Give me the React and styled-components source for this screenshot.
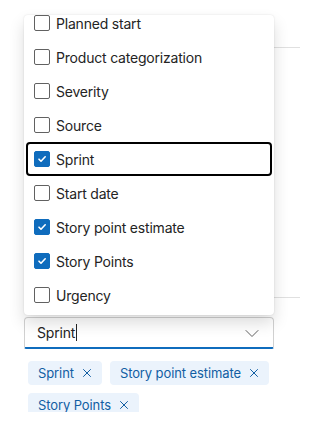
import { useLayoutEffect, useRef } from 'react';
import styled, { createGlobalStyle } from 'styled-components';

const GlobalStyle = createGlobalStyle`
  html, body {
    margin: 0;
    padding: 0;
    background: #ffffff;
  }
  body {
    font-family: Inter, "Liberation Sans", Arial, sans-serif;
    color: #242424;
  }
`;

const Page = styled.div`
  position: relative;
  height: 412px;
  overflow: hidden;
`;

const Column = styled.div`
  width: 276px;
  margin-left: 24px;
  display: flex;
  flex-direction: column;
`;

const Section = styled.div`
  height: ${(p) => p.$h}px;
  border-bottom: ${(p) => (p.$line ? '1px solid #e0e0e0' : 'none')};
`;

const Field = styled.div`
  width: 250px;
  height: 32px;
  box-sizing: border-box;
  display: flex;
  align-items: center;
  padding: 0 11px 0 12px;
  border: 1px solid #d1d1d1;
  border-bottom: 2px solid #0f6cbd;
  border-radius: 4px 4px 2px 2px;
  background: #ffffff;
  font-size: 14px;
  letter-spacing: -0.2px;
  color: #242424;
`;

const FieldText = styled.span`
  display: flex;
  align-items: center;
  flex: 1;
`;

const Caret = styled.span`
  display: inline-block;
  width: 1px;
  height: 17px;
  margin-left: 1px;
  background: #242424;
`;

const Tags = styled.div`
  display: flex;
  flex-wrap: wrap;
  gap: 8px;
  margin-top: 12px;
  padding-left: 4px;
`;

const Tag = styled.span`
  display: inline-flex;
  align-items: center;
  gap: 8px;
  height: 24px;
  padding: 0 10px;
  border-radius: 4px;
  background: #ebf3fc;
  color: #115ea3;
  font-size: 13px;
  letter-spacing: -0.1px;
`;

const Popover = styled.div`
  position: absolute;
  top: 15px;
  left: 24px;
  width: 250px;
  height: 300px;
  border-radius: 4px;
  background: #ffffff;
  box-shadow: 0 0 2px rgba(0, 0, 0, 0.12), 0 8px 16px rgba(0, 0, 0, 0.14);
  overflow: hidden;
`;

const List = styled.div`
  height: 100%;
  box-sizing: border-box;
  padding: 3px 2px;
  overflow-y: auto;
  scrollbar-width: none;
  &::-webkit-scrollbar {
    display: none;
  }
`;

const Option = styled.div`
  display: flex;
  align-items: center;
  gap: 6px;
  height: 34px;
  box-sizing: border-box;
  padding: 0 6px;
  border: 2px solid ${(p) => (p.$focused ? '#000000' : 'transparent')};
  border-radius: 4px;
  font-size: 14px;
  letter-spacing: -0.2px;
  color: #242424;
`;

const Box = styled.span`
  display: inline-flex;
  align-items: center;
  justify-content: center;
  flex-shrink: 0;
  width: 16px;
  height: 16px;
  box-sizing: border-box;
  border-radius: 2px;
  border: 1px solid ${(p) => (p.$checked ? '#0f6cbd' : '#616161')};
  background: ${(p) => (p.$checked ? '#0f6cbd' : '#ffffff')};
`;

const options = [
  { label: 'Original estimate' },
  { label: 'Parent' },
  { label: 'Pending reason' },
  { label: 'Planned end' },
  { label: 'Planned start' },
  { label: 'Product categorization' },
  { label: 'Severity' },
  { label: 'Source' },
  { label: 'Sprint', checked: true, focused: true },
  { label: 'Start date' },
  { label: 'Story point estimate', checked: true },
  { label: 'Story Points', checked: true },
  { label: 'Urgency' },
];

const selected = ['Sprint', 'Story point estimate', 'Story Points'];

const Check = () => (
  <svg width="12" height="12" viewBox="0 0 12 12">
    <path d="M3 6.2 L5 8.2 L9.2 3.8" fill="none" stroke="#ffffff" strokeWidth="1.6" strokeLinecap="round" strokeLinejoin="round" />
  </svg>
);

const Chevron = () => (
  <svg width="20" height="20" viewBox="0 0 20 20">
    <polyline points="4,7.5 10,13.5 16,7.5" fill="none" stroke="#616161" strokeWidth="1" strokeLinecap="round" strokeLinejoin="round" />
  </svg>
);

const Dismiss = () => (
  <svg width="10" height="10" viewBox="0 0 10 10">
    <path d="M1.5 1.5 L8.5 8.5 M8.5 1.5 L1.5 8.5" stroke="#115ea3" strokeWidth="1" strokeLinecap="round" />
  </svg>
);

export default function App() {
  const listRef = useRef(null);

  useLayoutEffect(() => {
    const el = listRef.current;
    if (el) el.scrollTop = el.scrollHeight;
  }, []);

  return (
    <Page>
      <GlobalStyle />
      <Column>
        <Section $h={47} $line />
        <Section $h={249} $line />
        <Section $h={19} />
        <Field>
          <FieldText>
            Sprint
            <Caret />
          </FieldText>
          <Chevron />
        </Field>
        <Tags>
          {selected.map((t) => (
            <Tag key={t}>
              {t}
              <Dismiss />
            </Tag>
          ))}
        </Tags>
      </Column>
      <Popover>
        <List ref={listRef}>
          {options.map((o) => (
            <Option key={o.label} $focused={o.focused}>
              <Box $checked={o.checked}>{o.checked && <Check />}</Box>
              {o.label}
            </Option>
          ))}
        </List>
      </Popover>
    </Page>
  );
}
